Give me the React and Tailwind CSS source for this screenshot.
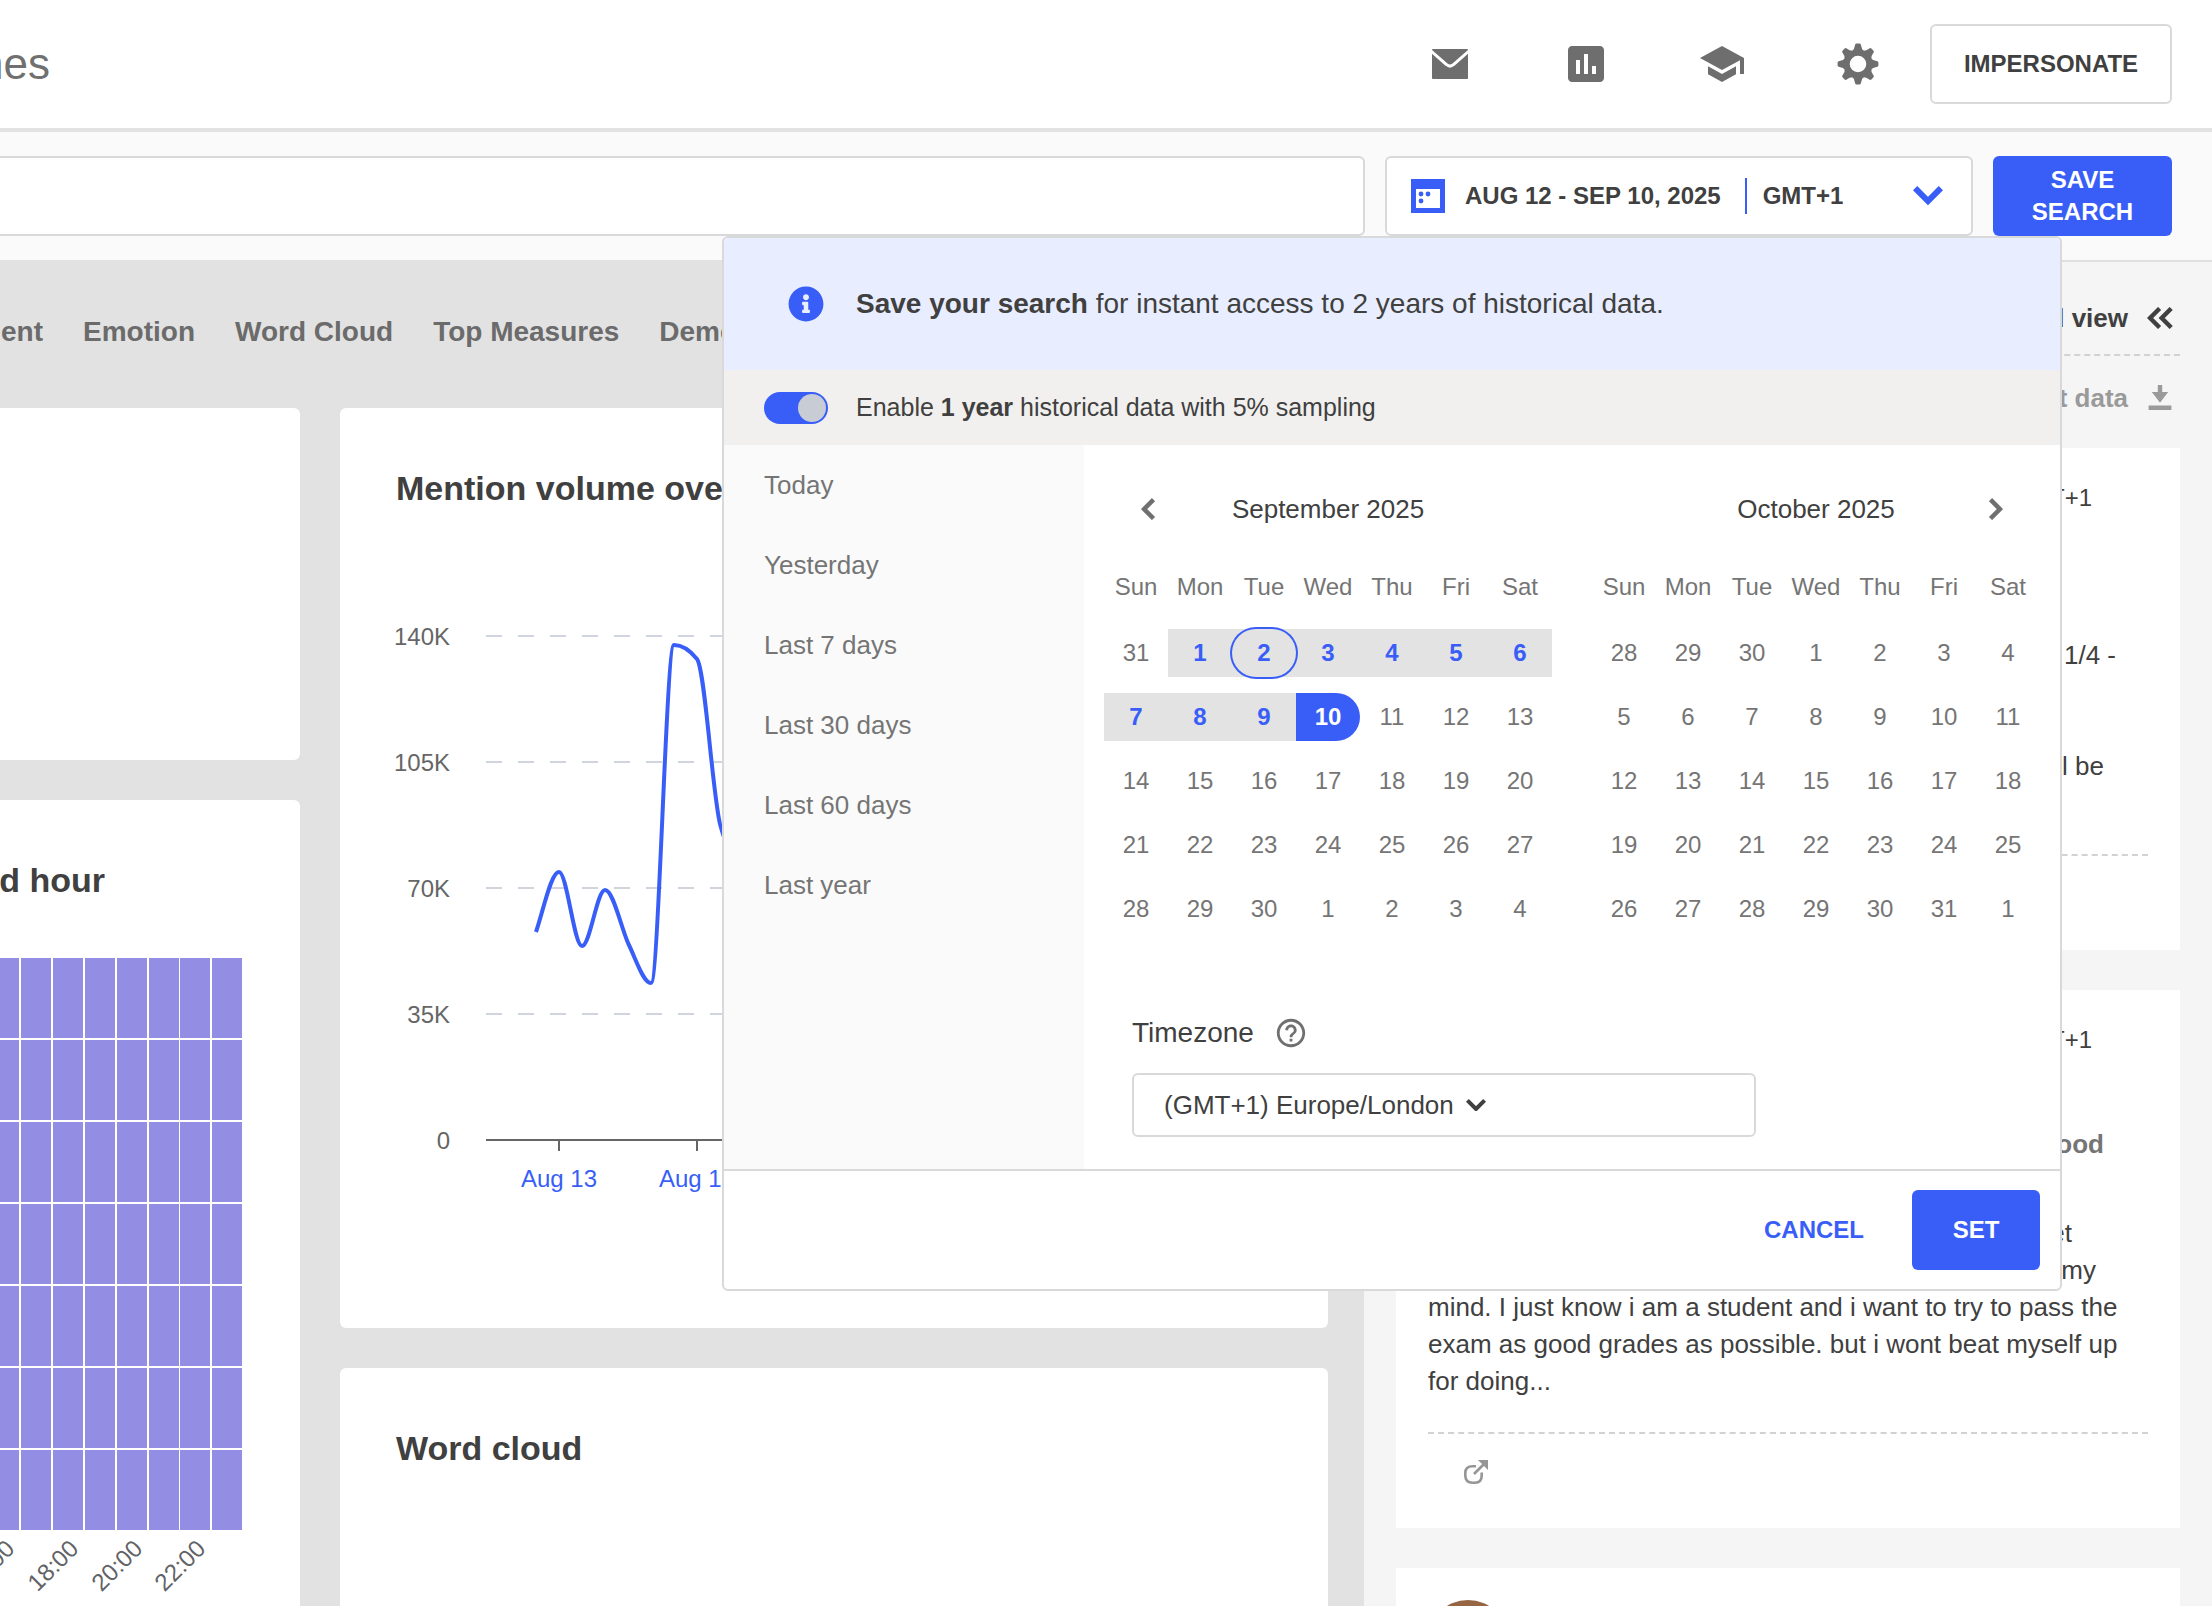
import React, { useState } from 'react';
import { MdAssessment, MdSchool, MdHelpOutline } from 'react-icons/md';
import { FaInfoCircle } from 'react-icons/fa';

const NAV_ITEMS = ['Emotion', 'Word Cloud', 'Top Measures', 'Demographics', 'Authors'];
const WEEKDAYS = ['Sun', 'Mon', 'Tue', 'Wed', 'Thu', 'Fri', 'Sat'];
const PRESETS = ['Today', 'Yesterday', 'Last 7 days', 'Last 30 days', 'Last 60 days', 'Last year'];

const SEPTEMBER = [
  [31, 1, 2, 3, 4, 5, 6],
  [7, 8, 9, 10, 11, 12, 13],
  [14, 15, 16, 17, 18, 19, 20],
  [21, 22, 23, 24, 25, 26, 27],
  [28, 29, 30, 1, 2, 3, 4],
];

const OCTOBER = [
  [28, 29, 30, 1, 2, 3, 4],
  [5, 6, 7, 8, 9, 10, 11],
  [12, 13, 14, 15, 16, 17, 18],
  [19, 20, 21, 22, 23, 24, 25],
  [26, 27, 28, 29, 30, 31, 1],
];

// ============================================
// MAIN APP COMPONENT
// ============================================

export default function App() {
  return (
    <div className="flex h-screen flex-col overflow-hidden bg-[#fafafa] font-['Liberation_Sans',Arial,sans-serif] text-[#404040]">
      <Header />
      <SearchBar />
      <div className="flex min-h-0 flex-1">
        <Dashboard />
        <MentionsPanel />
      </div>
    </div>
  );
}

// ============================================
// HEADER + SEARCH BAR
// ============================================

function Header() {
  return (
    <header className="flex shrink-0 items-center justify-between border-b-4 border-[#e2e2e2] bg-white py-6 pr-10">
      <h1 className="flex w-[50px] justify-end text-[44px] leading-[52px] text-[#707070]">Headlines</h1>
      <div className="flex items-center gap-12 text-[#6e6e6e]">
        <nav className="flex items-center gap-[88px]">
          <button aria-label="Messages" className="flex size-12 items-center justify-center"><MailIcon /></button>
          <button aria-label="Reports"><MdAssessment size={48} /></button>
          <button aria-label="Academy"><MdSchool size={48} /></button>
          <button aria-label="Settings" className="flex size-12 items-center justify-center"><GearIcon /></button>
        </nav>
        <button className="h-20 w-[242px] rounded-md border-2 border-[#d8d9db] text-2xl font-bold text-[#404040]">
          IMPERSONATE
        </button>
      </div>
    </header>
  );
}

function SearchBar() {
  const [open, setOpen] = useState(true);

  return (
    <div className="flex shrink-0 gap-5 py-6 pr-10">
      <input
        type="text"
        aria-label="Search query"
        className="h-20 min-w-0 flex-1 rounded-r-md border-2 border-l-0 border-[#d8d9db] bg-white px-6 text-2xl"
      />
      <div className="relative z-10 w-[588px]">
        <button
          onClick={() => setOpen(!open)}
          className="flex h-20 w-full items-center rounded-md border-2 border-[#d8d9db] bg-white px-6 text-2xl font-bold"
        >
          <CalendarIcon />
          <span className="ml-5">AUG 12 - SEP 10, 2025</span>
          <span className="ml-6 h-9 w-0.5 bg-[#385ef7]" />
          <span className="ml-4">GMT+1</span>
          <Chevron width={30} stroke={6} className="mr-1 ml-auto text-[#385ef7]" />
        </button>
        {open && <DatePicker onClose={() => setOpen(false)} />}
      </div>
      <button className="h-20 w-[179px] rounded-md bg-[#385ef7] px-8 text-2xl leading-8 font-bold text-white">
        SAVE SEARCH
      </button>
    </div>
  );
}

// ============================================
// DATE PICKER
// ============================================

function DatePicker({ onClose }) {
  const [sampling, setSampling] = useState(true);

  return (
    <div className="absolute top-full right-[-89px] w-[1340px] overflow-hidden rounded-md border-2 border-[#d8d9db] bg-white">
      <div className="flex h-[132px] items-center bg-[#e8eeff] pl-16">
        <FaInfoCircle size={36} className="text-[#385ef7]" />
        <p className="ml-8 text-[28px]">
          <strong>Save your search</strong> for instant access to 2 years of historical data.
        </p>
      </div>

      <label className="flex h-[75px] items-center gap-7 bg-[#f1f0ee] pl-10 text-[25px]">
        <input
          type="checkbox"
          role="switch"
          checked={sampling}
          onChange={e => setSampling(e.target.checked)}
          className="flex h-8 w-16 appearance-none items-center rounded-full bg-[#9a9a9a] p-0.5 before:size-7 before:rounded-full before:bg-[#c8ccd5] checked:justify-end checked:bg-[#385ef7]"
        />
        <span>Enable <strong>1 year</strong> historical data with 5% sampling</span>
      </label>

      <div className="flex">
        <ul className="w-[360px] bg-[#fafafa] text-[26px] text-[#757575]">
          {PRESETS.map(preset => (
            <li key={preset}>
              <button className="h-20 w-full pl-10 text-left">{preset}</button>
            </li>
          ))}
        </ul>

        <div className="flex-1 px-5 pt-10 pb-8">
          <div className="flex gap-10">
            <Month title="September 2025" weeks={SEPTEMBER} rangeEnd={10} today={2} prev />
            <Month title="October 2025" weeks={OCTOBER} next />
          </div>

          <div className="mt-16 ml-7">
            <div className="flex h-10 items-center gap-5 text-[28px]">
              <label htmlFor="timezone">Timezone</label>
              <MdHelpOutline size={34} className="text-[#707070]" />
            </div>
            <div className="mt-5 flex h-16 w-[624px] items-center gap-3 rounded-md border-2 border-[#d8d9db] pl-[30px]">
              <select id="timezone" className="field-sizing-content appearance-none bg-transparent text-[26px]">
                <option>(GMT+1) Europe/London</option>
              </select>
              <Chevron width={20} stroke={4} />
            </div>
          </div>
        </div>
      </div>

      <div className="flex items-center justify-end gap-12 border-t-2 border-[#d8d9db] px-5 py-[19px] text-2xl font-bold">
        <button onClick={onClose} className="h-20 text-[#385ef7]">CANCEL</button>
        <button onClick={onClose} className="h-20 w-32 rounded-md bg-[#385ef7] text-white">SET</button>
      </div>
    </div>
  );
}

function Month({ title, weeks, rangeEnd = 0, today, prev, next }) {
  function dayStyle(day, week) {
    const inRange = week < 2 && day <= rangeEnd;
    if (!inRange) return 'text-[#757575]';
    if (day === rangeEnd) return 'rounded-r-full bg-[#385ef7] font-bold text-white';
    return 'bg-[#e3e3e3] font-bold text-[#385ef7]';
  }

  return (
    <div className="w-[448px]">
      <div className="grid h-12 grid-cols-[48px_1fr_48px] items-center px-5 text-[26px]">
        <div className="text-[#707070]">
          {prev && (
            <button aria-label="Previous month" className="flex size-12 items-center justify-center">
              <Chevron width={22} stroke={4.5} className="rotate-90" />
            </button>
          )}
        </div>
        <h3 className="text-center">{title}</h3>
        <div className="text-[#707070]">
          {next && (
            <button aria-label="Next month" className="flex size-12 items-center justify-center">
              <Chevron width={22} stroke={4.5} className="-rotate-90" />
            </button>
          )}
        </div>
      </div>
      <table className="mt-4 w-full table-fixed border-separate border-spacing-x-0 border-spacing-y-4 text-2xl text-[#757575]">
        <thead>
          <tr>
            {WEEKDAYS.map(d => <th key={d} className="h-12 p-0 pb-1 font-normal">{d}</th>)}
          </tr>
        </thead>
        <tbody>
          {weeks.map((week, w) => (
            <tr key={w}>
              {week.map(day => (
                <td key={day} className={`h-12 p-0 ${dayStyle(day, w)}`}>
                  <button className={`relative block h-12 w-full ${w === 0 && day === today ? 'rounded-full ring-2 ring-[#385ef7]' : ''}`}>
                    {day}
                  </button>
                </td>
              ))}
            </tr>
          ))}
        </tbody>
      </table>
    </div>
  );
}

// ============================================
// DASHBOARD
// ============================================

function Dashboard() {
  return (
    <main className="min-w-0 flex-1 overflow-hidden bg-[#e2e2e2] pr-9">
      <nav className="flex h-[148px] items-center gap-10 pb-1 text-[28px] font-bold whitespace-nowrap text-[#6b6b6b]">
        <a href="#sentiment" className="flex w-[43px] justify-end">Sentiment</a>
        {NAV_ITEMS.map(item => <a key={item} href="#top">{item}</a>)}
      </nav>

      <div className="flex items-start gap-10">
        <div className="flex w-[300px] shrink-0 flex-col gap-10">
          <section className="h-[352px] rounded-r-md bg-white" />
          <section className="h-[920px] overflow-hidden rounded-r-md bg-white pt-[60px]">
            <h2 className="flex w-[105px] justify-end text-[34px] leading-10 font-bold whitespace-nowrap">
              Mentions by day and hour
            </h2>
            <HeatMap />
          </section>
        </div>

        <div className="flex min-w-0 flex-1 flex-col gap-10">
          <section className="overflow-hidden rounded-md bg-white pt-[60px]">
            <h2 className="px-14 text-[34px] leading-10 font-bold">Mention volume over time</h2>
            <VolumeChart />
          </section>
          <section className="h-[600px] rounded-md bg-white pt-[60px]">
            <h2 className="px-14 text-[34px] leading-10 font-bold">Word cloud</h2>
          </section>
        </div>
      </div>
    </main>
  );
}

function VolumeChart() {
  const ticks = [
    { label: '140K', y: 108 },
    { label: '105K', y: 234 },
    { label: '70K', y: 360 },
    { label: '35K', y: 486 },
    { label: '0', y: 612 },
  ];
  const days = [
    { label: 'Aug 13', x: 219 },
    { label: 'Aug 19', x: 357 },
    { label: 'Aug 25', x: 495 },
    { label: 'Aug 31', x: 633 },
    { label: 'Sep 6', x: 771 },
  ];

  return (
    <svg className="mt-5 h-[800px] w-full" fontSize="24">
      {ticks.map(t => (
        <g key={t.label}>
          {t.y < 612 && <line x1="146" x2="930" y1={t.y} y2={t.y} stroke="#d0d4dd" strokeWidth="2" strokeDasharray="16 16" />}
          <text x="110" y={t.y + 9} textAnchor="end" fill="#666666">{t.label}</text>
        </g>
      ))}
      <line x1="146" x2="930" y1="612" y2="612" stroke="#666666" strokeWidth="2" />
      {days.map(d => (
        <g key={d.label}>
          <line x1={d.x} x2={d.x} y1="612" y2="623" stroke="#666666" strokeWidth="2" />
          <text x={d.x} y="659" textAnchor="middle" fill="#385ef7">{d.label}</text>
        </g>
      ))}
      <path
        d="M196 404 C204 380 211 344 219 344 S234 418 242 418 S257 362 265 362 C273 362 280 396 288 415 C296 431 303 455 311 455 C319 455 326 117 334 117 C342 117 349 121 357 131 C365 141 372 262 380 296 C388 326 395 330 403 322"
        fill="none"
        stroke="#385ef7"
        strokeWidth="4"
      />
    </svg>
  );
}

function HeatMap() {
  const hours = Array.from({ length: 24 }, (_, i) => i);
  const rows = [0, 1, 2, 3, 4, 5, 6];
  const step = 764 / 24;

  return (
    <div className="mt-[58px] flex w-[242px] justify-end">
      <svg width="762" height="680" className="shrink-0" fontSize="24">
        {rows.map(r => hours.map(h => (
          <rect key={`${r}-${h}`} x={Math.round(h * step)} y={r * 82} width="30" height="80" fill="#938ee4" />
        )))}
        {hours.filter(h => h % 2 === 0).map(h => (
          <text
            key={h}
            textAnchor="end"
            fill="#5f6366"
            transform={`translate(${Math.round(h * step) + 27} 592) rotate(-45)`}
          >
            {String(h).padStart(2, '0')}:00
          </text>
        ))}
      </svg>
    </div>
  );
}

// ============================================
// MENTIONS PANEL
// ============================================

function MentionsPanel() {
  return (
    <aside className="w-[848px] shrink-0 overflow-hidden border-t-2 border-[#e0e0e0] bg-[#f5f5f5] px-8 text-[26px]">
      <div className="flex items-center justify-end gap-3 border-b-2 border-dashed border-[#d2d2d2] pt-9 pb-4 font-bold">
        <span className="leading-10">Expanded view</span>
        <button aria-label="Collapse panel" className="flex h-10 w-10 items-center justify-center">
          <CollapseIcon />
        </button>
      </div>
      <div className="mb-2 flex h-[84px] items-center justify-end gap-3 font-bold text-[#9a9a9a]">
        <span>Export data</span>
        <button aria-label="Download" className="flex h-10 w-10 items-center justify-center"><DownloadIcon /></button>
      </div>

      <div className="flex flex-col gap-10">
        <article className="bg-white p-8">
          <MentionHeader time="Sep 10, 2025 10:42 GMT+1" />
          <p className="mt-[77px] leading-[37px]">
            <span className="block pr-8 text-right">Scored 1/4 -</span>
            <span className="block">on the first paper</span>
            <span className="block">and then moved on</span>
            <span className="block pr-11 text-right">hoping it will be</span>
            <span className="block">fine</span>
          </p>
          <MentionFooter />
        </article>

        <article className="bg-white p-8">
          <MentionHeader time="Sep 10, 2025 10:38 GMT+1" />
          <h4 className="mt-6 pr-11 text-right leading-[37px] font-bold text-[#757575]">Feeling good</h4>
          <p className="mt-[52px] leading-[37px]">
            <span className="block pr-19 text-right">trying not to let it get</span>
            <span className="block pr-13 text-right">stay on my</span>
            <span className="block">mind. I just know i am a student and i want to try to pass the</span>
            <span className="block">exam as good grades as possible. but i wont beat myself up</span>
            <span className="block">for doing...</span>
          </p>
          <MentionFooter />
        </article>

        <article className="bg-white p-8">
          <MentionHeader time="Sep 10, 2025 10:31 GMT+1" />
        </article>
      </div>
    </aside>
  );
}

function MentionHeader({ time }) {
  return (
    <div className="flex items-start justify-between pr-14">
      <div className="size-20 rounded-full bg-[#966644]" />
      <time className="text-2xl leading-9">{time}</time>
    </div>
  );
}

function MentionFooter() {
  return (
    <div className="mt-8 h-16 border-t-2 border-dashed border-[#d2d2d2] pt-[26px] pl-9 text-[#969696]">
      <a href="#mention" aria-label="Open mention" className="block w-6"><ExternalIcon /></a>
    </div>
  );
}

// ============================================
// ICONS
// ============================================

// points down, rotate it with a class for the other directions
function Chevron({ width, stroke, className }) {
  const edge = stroke * 0.354;
  const mid = width / 2;
  const height = mid + edge * 2;

  return (
    <svg width={width} height={height} className={className} fill="none" stroke="currentColor" strokeWidth={stroke}>
      <path d={`M${edge} ${edge} L${mid} ${mid} L${width - edge} ${edge}`} />
    </svg>
  );
}

function CollapseIcon() {
  return (
    <svg width="26" height="22" viewBox="0 0 26 22" className="shrink-0" fill="none" stroke="currentColor" strokeWidth="4.4">
      <path d="M12.6 1.5 3.1 11l9.5 9.5M24.2 1.5 14.7 11l9.5 9.5" />
    </svg>
  );
}

function MailIcon() {
  return (
    <svg width="36" height="30" viewBox="0 0 36 30">
      <rect width="36" height="30" rx="1" fill="currentColor" />
      <path d="M-1 2 L14.5 15.5 Q18 18.8 21.5 15.5 L37 2" fill="none" stroke="white" strokeWidth="3" />
    </svg>
  );
}

function GearIcon() {
  return (
    <svg width="42" height="42" viewBox="-21 -21 42 42" fill="currentColor">
      <circle r="11.3" fill="none" stroke="currentColor" strokeWidth="6" />
      {[0, 45, 90, 135, 180, 225, 270, 315].map(a => (
        <path
          key={a}
          transform={`rotate(${a})`}
          d="M-6 -12.8 Q-3.6 -14.5 -3.1 -18.5 Q-2.9 -20.4 -1.5 -20.4 H1.5 Q2.9 -20.4 3.1 -18.5 Q3.6 -14.5 6 -12.8Z"
        />
      ))}
    </svg>
  );
}

function CalendarIcon() {
  return (
    <svg width="34" height="34" viewBox="0 0 34 34" fill="#385ef7">
      <rect width="34" height="34" />
      <rect x="5" y="10" width="24" height="19" fill="white" />
      <circle cx="10" cy="15" r="2.4" />
      <circle cx="17" cy="15" r="2.4" />
      <circle cx="10" cy="22" r="2.4" />
    </svg>
  );
}

function DownloadIcon() {
  return (
    <svg width="24" height="26" viewBox="0 0 24 26" fill="currentColor">
      <path d="M9.8 0h4.4v7h6L12 17.7 3.8 7h6zM.6 20.6h22.8V25H.6z" />
    </svg>
  );
}

function ExternalIcon() {
  return (
    <svg width="24" height="24" viewBox="0 0 24 24" fill="none" stroke="currentColor" strokeWidth="2.6">
      <path d="M12 6.3H8.5Q1.3 6.3 1.3 13v2.5Q1.3 22.7 8.5 22.7h2.5q6.7 0 6.7-7.2V12.5" />
      <path d="M10 14 20 4" />
      <path d="M14 0h10v10z" fill="currentColor" stroke="none" />
    </svg>
  );
}
